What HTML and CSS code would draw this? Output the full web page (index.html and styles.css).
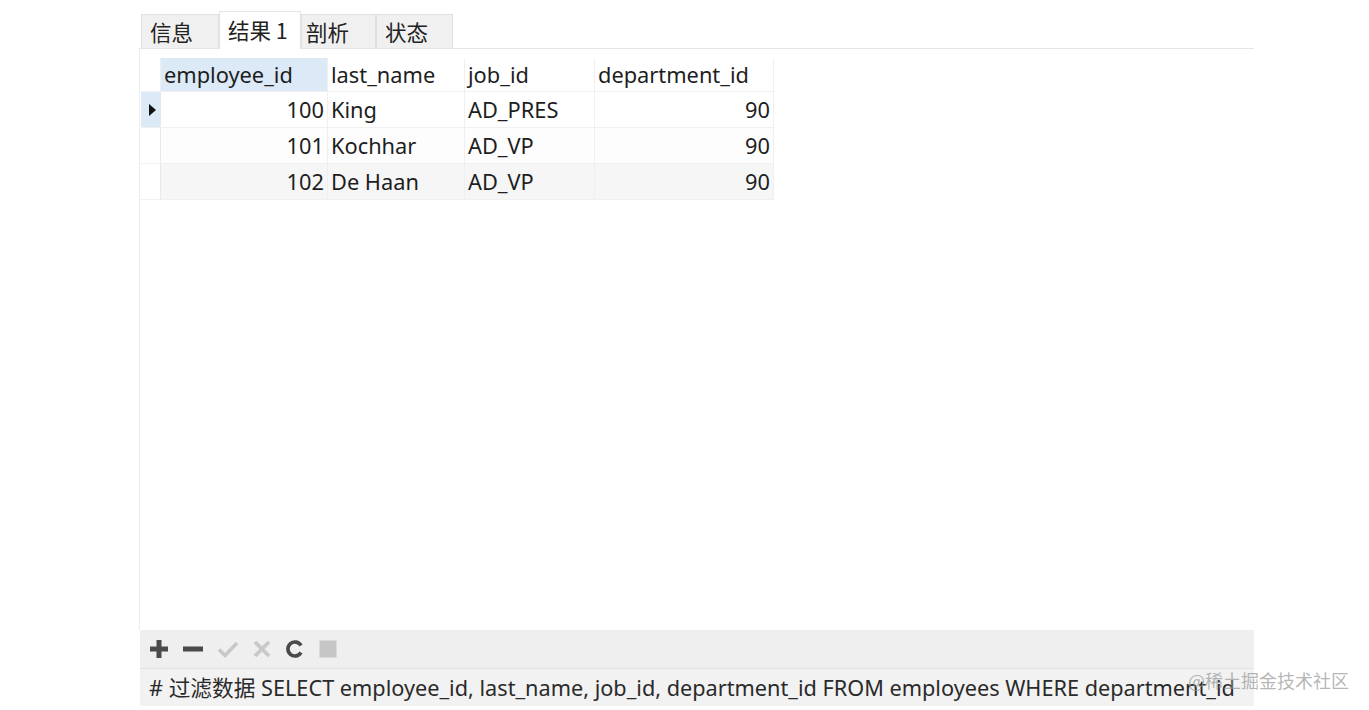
FILE: index.html
```html
<!DOCTYPE html>
<html lang="zh">
<head>
<meta charset="utf-8">
<link rel="stylesheet" href="styles.css">
</head>
<body>
<div class="window">
  <div class="tabs">
    <div class="tab">信息</div>
    <div class="tab active">结果 1</div>
    <div class="tab">剖析</div>
    <div class="tab">状态</div>
  </div>
  <div class="content">
    <table class="grid">
      <thead>
        <tr>
          <th class="ind"></th>
          <th class="c1 sel">employee_id</th>
          <th class="c2">last_name</th>
          <th class="c3">job_id</th>
          <th class="c4">department_id</th>
        </tr>
      </thead>
      <tbody>
        <tr class="r1">
          <td class="ind cur"><svg width="7" height="12" viewBox="0 0 7 12"><path d="M0 0 L7 6 L0 12 Z" fill="#111"/></svg></td>
          <td class="num">100</td><td>King</td><td>AD_PRES</td><td class="num">90</td>
        </tr>
        <tr class="r2">
          <td class="ind"></td>
          <td class="num">101</td><td>Kochhar</td><td>AD_VP</td><td class="num">90</td>
        </tr>
        <tr class="r3">
          <td class="ind"></td>
          <td class="num">102</td><td>De Haan</td><td>AD_VP</td><td class="num">90</td>
        </tr>
      </tbody>
    </table>
  </div>
  <div class="toolbar">
    <svg class="ico" width="20" height="20" viewBox="0 0 20 20"><path d="M7.5 1h5v6.5H19v5h-6.5V19h-5v-6.5H1v-5h6.5z" fill="#4a4a4a"/></svg>
    <svg class="ico" width="22" height="20" viewBox="0 0 22 20"><rect x="1" y="7.5" width="20" height="5" fill="#4a4a4a"/></svg>
    <svg class="ico" width="22" height="20" viewBox="0 0 22 20"><path d="M2 10.5 L8 16.5 L20 4" fill="none" stroke="#c8c8c8" stroke-width="3.6"/></svg>
    <svg class="ico" width="20" height="20" viewBox="0 0 20 20"><path d="M3 3 L17 17 M17 3 L3 17" fill="none" stroke="#c8c8c8" stroke-width="3.8"/></svg>
    <svg class="ico" width="20" height="20" viewBox="0 0 20 20"><path d="M16 6.5 A7 7 0 1 0 16 13.5" fill="none" stroke="#4a4a4a" stroke-width="3.6"/></svg>
    <svg class="ico" width="20" height="20" viewBox="0 0 20 20"><rect x="1.5" y="1.5" width="17" height="17" fill="#c6c6c6"/></svg>
  </div>
  <div class="sqlbar"># 过滤数据 SELECT employee_id, last_name, job_id, department_id FROM employees WHERE department_id</div>
</div>
<div class="watermark">@稀土掘金技术社区</div>
</body>
</html>
```
FILE: styles.css
```css
html, body {
  margin: 0;
  padding: 0;
  background: #ffffff;
}
body {
  font-family: "Noto Sans", "Noto Sans CJK SC", sans-serif;
  color: #1e1e1e;
  position: relative;
  height: 710px;
  overflow: hidden;
}
.window {
  margin-left: 139px;
  width: 1115px;
  padding-top: 11px;
}
.tabs {
  display: flex;
  align-items: flex-end;
  height: 37px;
  padding-left: 2px;
  border-bottom: 1px solid #e4e4e4;
}
.tab {
  box-sizing: border-box;
  height: 34px;
  background: #f0f0f0;
  border: 1px solid #e0e0e0;
  border-bottom: none;
  font-family: "Noto Sans CJK SC", sans-serif;
  font-size: 21.5px;
  line-height: 34px;
  padding-left: 8px;
  color: #222;
}
.tab:nth-child(1) { width: 78px; }
.tab:nth-child(2) { width: 82px; }
.tab:nth-child(3) { width: 75px; padding-left: 4px; }
.tab:nth-child(4) { width: 77px; }
.tab.active {
  height: 38px;
  background: #ffffff;
  line-height: 36px;
  margin-bottom: -1px;
  border-color: #e4e4e4;
}
.content {
  height: 581px;
  border-left: 1px solid #ececec;
  box-sizing: border-box;
  padding-top: 9px;
  padding-left: 1px;
}
.grid {
  border-collapse: collapse;
  font-size: 21.8px;
  table-layout: fixed;
}
.grid th, .grid td {
  height: 35px;
  padding: 0 3px;
  border-right: 1px solid #f0f0f0;
  border-bottom: 1px solid #f0f0f0;
  font-weight: normal;
  text-align: left;
  white-space: nowrap;
  line-height: 35px;
  color: #1e1e1e;
}
.grid th {
  height: 33px;
  line-height: 33px;
  background: #ffffff;
}
.grid th.sel { background: #dce9f7; }
.grid .ind {
  width: 19px;
  padding: 0;
  text-align: center;
  background: #ffffff;
}
.grid td.ind { border-right: 1px solid #e8e8e8; }
.grid td.cur { background: #dce9f7; }
.grid td.cur svg { display: block; margin: 0 auto 0 8px; }
.c1 { width: 160px; }
.c2 { width: 130px; }
.c3 { width: 123px; }
.c4 { width: 172px; }
.grid td.num { text-align: right; }
.r2 td { background: #fdfdfd; }
.r3 td { background: #f6f6f6; }
.r3 td.ind { background: #ffffff; }
.toolbar {
  height: 38px;
  background: #efefef;
  display: flex;
  align-items: center;
  gap: 13px;
  padding-left: 9px;
  margin-left: 1px;
}
.sqlbar {
  height: 37px;
  background: #f2f2f2;
  border-top: 1px solid #e2e2e2;
  margin-left: 1px;
  padding-left: 9px;
  font-family: "Noto Sans", "Noto Sans CJK SC", sans-serif;
  font-size: 21.7px;
  line-height: 37px;
  color: #2a2a2a;
  white-space: nowrap;
  overflow: hidden;
}
.watermark {
  position: absolute;
  left: 1188px;
  top: 667px;
  font-family: "Noto Sans CJK SC", sans-serif;
  font-size: 18px;
  color: rgba(150, 150, 150, 0.7);
  white-space: nowrap;
}
```
